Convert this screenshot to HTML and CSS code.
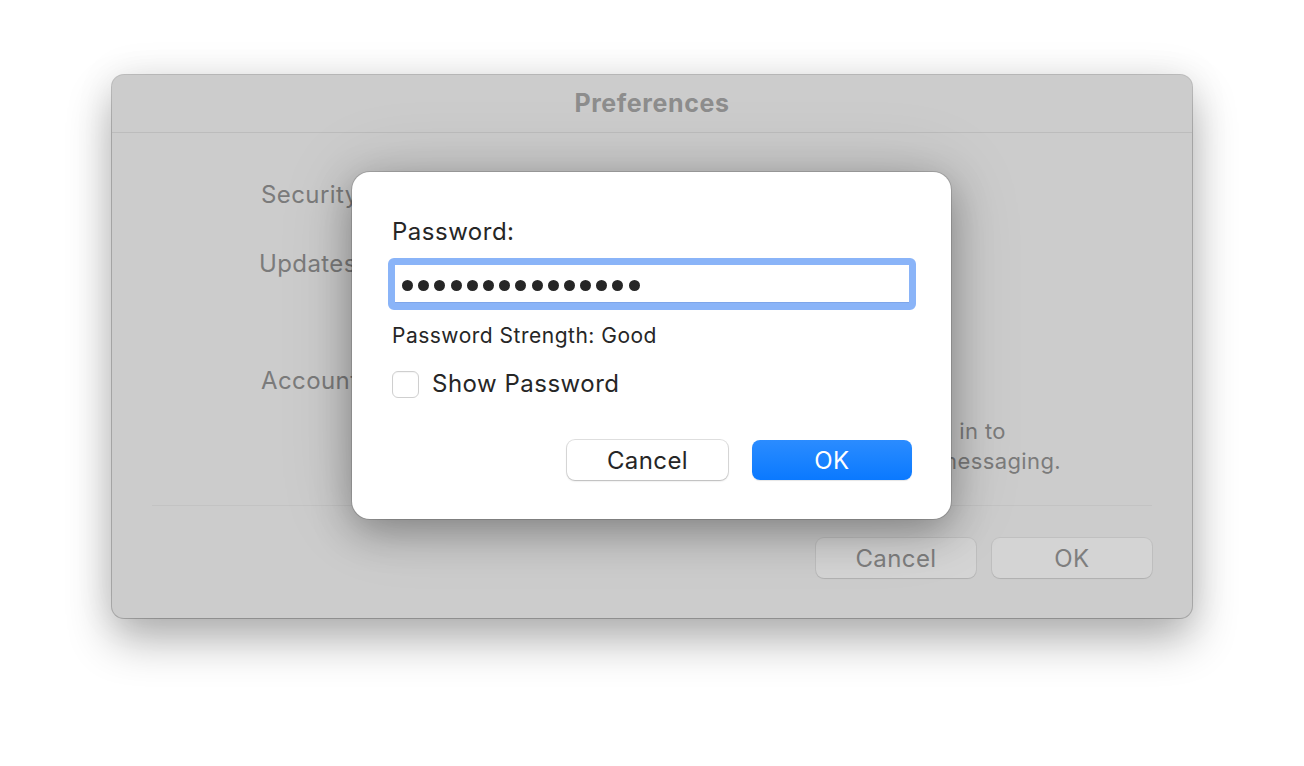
FILE: index.html
```html
<!DOCTYPE html>
<html>
<head>
<meta charset="utf-8">
<link rel="stylesheet" href="styles.css">
</head>
<body>
<div class="stage">
  <div class="window">
    <div class="titlebar">Preferences</div>
    <div class="content">
      <div class="form">
        <div class="label l-security">Security:</div>
        <div class="label l-updates">Updates:</div>
        <div class="label l-accounts">Accounts:</div>
        <p class="note"><span class="line l1">and sign in to</span><span class="line l2">secure messaging.</span></p>
      </div>
      <div class="sep"></div>
      <div class="actions">
        <div class="btn btn-dim">Cancel</div>
        <div class="btn btn-dim">OK</div>
      </div>
    </div>
    <div class="sheet">
      <div class="field-label">Password:</div>
      <div class="pw-field">
        <span class="dot"></span><span class="dot"></span><span class="dot"></span><span class="dot"></span><span class="dot"></span>
        <span class="dot"></span><span class="dot"></span><span class="dot"></span><span class="dot"></span><span class="dot"></span>
        <span class="dot"></span><span class="dot"></span><span class="dot"></span><span class="dot"></span><span class="dot"></span>
      </div>
      <div class="strength">Password Strength: Good</div>
      <label class="check-row"><span class="checkbox"></span><span class="check-text">Show Password</span></label>
      <div class="sheet-actions">
        <div class="btn btn-secondary">Cancel</div>
        <div class="btn btn-primary">OK</div>
      </div>
    </div>
  </div>
</div>
</body>
</html>
```
FILE: styles.css
```css
* { box-sizing: border-box; }
html, body { margin: 0; padding: 0; }
body {
  width: 1304px;
  height: 766px;
  background: #ffffff;
  font-family: "Inter", "Noto Sans", sans-serif;
  overflow: hidden;
}
.stage {
  padding: 75px 0 0 112px;
}
.window {
  position: relative;
  width: 1080px;
  height: 543px;
  background: #cccccc;
  border-radius: 12px;
  box-shadow: 0 0 0 1px rgba(0,0,0,0.22), 0 22px 45px rgba(0,0,0,0.30), 0 0 40px rgba(0,0,0,0.08);
}
.titlebar {
  height: 58px;
  border-bottom: 1px solid #bcbcbc;
  display: flex;
  align-items: center;
  justify-content: center;
  font-weight: 700;
  font-size: 25px;
  letter-spacing: 0.6px;
  color: #8d8d8d;
  padding-bottom: 2px;
}
.content {
  padding: 0 40px 40px;
}
.form {
  padding-left: 108px;
  display: flex;
  flex-direction: column;
}
.label {
  font-size: 24px;
  letter-spacing: 0.4px;
  line-height: 30px;
  height: 30px;
  color: #7b7b7b;
  white-space: nowrap;
}
.l-security { margin-top: 47px; margin-left: 1px; }
.l-updates { margin-top: 39px; margin-left: -1px; }
.l-accounts { margin-top: 87px; margin-left: 1px; }
.note {
  margin: 20px 0 0 0;
  padding-left: 598px;
  font-size: 22px;
  letter-spacing: 0.4px;
  line-height: 30px;
  color: #7b7b7b;
  display: flex;
  flex-direction: column;
  white-space: nowrap;
}
.l1 { padding-left: 3px; }
.sep {
  margin-top: 29px;
  height: 1px;
  background: #c3c3c3;
}
.actions {
  margin-top: 32px;
  display: flex;
  justify-content: flex-end;
  gap: 16px;
}
.btn {
  height: 40px;
  border-radius: 8px;
  display: flex;
  align-items: center;
  justify-content: center;
  font-size: 24px;
  letter-spacing: 0.4px;
}
.btn-dim {
  width: 160px;
  background: #d4d4d4;
  color: #7e7e7e;
  box-shadow: 0 0 0 1px rgba(0,0,0,0.06), 0 1px 1px rgba(0,0,0,0.08);
}
.sheet {
  position: absolute;
  left: 240px;
  top: 97px;
  width: 599px;
  height: 347px;
  background: #ffffff;
  border-radius: 18px;
  padding: 45px 39px 0 40px;
  box-shadow: 0 0 0 1px rgba(0,0,0,0.14), 0 12px 40px rgba(0,0,0,0.32), 0 0 80px rgba(0,0,0,0.12);
  display: flex;
  flex-direction: column;
  color: #262626;
}
.field-label {
  font-size: 24px;
  letter-spacing: 0.5px;
  line-height: 30px;
  height: 30px;
}
.pw-field {
  margin: 11px -4px 0 -4px;
  height: 52px;
  border: 7px solid #8ab4f8;
  border-radius: 6px;
  background: #fff;
  box-shadow: inset 0 -1px 0 #7ea6ea;
  display: flex;
  align-items: center;
  gap: 5.2px;
  padding-left: 7px;
  padding-top: 2px;
}
.dot {
  width: 11px;
  height: 11px;
  border-radius: 50%;
  background: #262626;
  flex: none;
}
.strength {
  margin-top: 14px;
  font-size: 21px;
  letter-spacing: 0.5px;
  line-height: 24px;
  height: 24px;
}
.check-row {
  margin-top: 21px;
  height: 30px;
  display: flex;
  align-items: center;
  gap: 13px;
}
.checkbox {
  width: 27px;
  height: 27px;
  border-radius: 6px;
  border: 1px solid #cfcfcf;
  background: #fff;
  box-shadow: inset 0 1px 1px rgba(0,0,0,0.04);
}
.check-text {
  font-size: 24px;
  letter-spacing: 0.5px;
  line-height: 30px;
}
.sheet-actions {
  margin-top: 41px;
  display: flex;
  justify-content: flex-end;
  gap: 24px;
}
.btn-secondary {
  width: 161px;
  background: #fff;
  color: #262626;
  box-shadow: 0 0 0 1px rgba(0,0,0,0.12), 0 1px 2px rgba(0,0,0,0.18);
}
.btn-primary {
  width: 160px;
  background: linear-gradient(#2b8cff, #0a79ff);
  color: #fff;
  box-shadow: 0 1px 1px rgba(0,0,0,0.1);
}
```
